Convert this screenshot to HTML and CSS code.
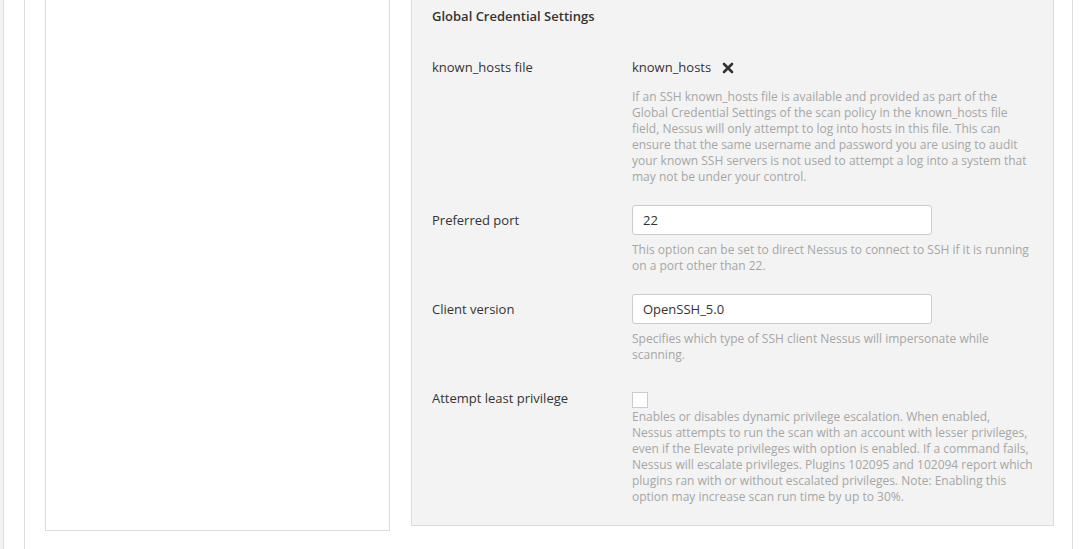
FILE: index.html
```html
<!DOCTYPE html>
<html>
<head>
<meta charset="utf-8">
<link rel="stylesheet" href="styles.css">
</head>
<body>
<div class="page">
  <div class="rail"></div>
  <div class="main">
    <div class="content">
      <div class="sidebox"></div>
      <section class="panel">
        <h3 class="panel-title">Global Credential Settings</h3>

        <div class="row">
          <div class="label">known_hosts file</div>
          <div class="field">
            <div class="file-value">
              <span>known_hosts</span>
              <svg class="remove" width="12" height="12" viewBox="0 0 12 12"><path d="M2 2 L10 10 M10 2 L2 10" stroke="#333" stroke-width="2.6" stroke-linecap="round"/></svg>
            </div>
            <p class="help">If an SSH known_hosts file is available and provided as part of the Global Credential Settings of the scan policy in the known_hosts file field, Nessus will only attempt to log into hosts in this file. This can ensure that the same username and password you are using to audit your known SSH servers is not used to attempt a log into a system that may not be under your control.</p>
          </div>
        </div>

        <div class="row">
          <div class="label">Preferred port</div>
          <div class="field">
            <input class="text-input" type="text" value="22">
            <p class="help">This option can be set to direct Nessus to connect to SSH if it is running on a port other than 22.</p>
          </div>
        </div>

        <div class="row">
          <div class="label">Client version</div>
          <div class="field">
            <input class="text-input" type="text" value="OpenSSH_5.0">
            <p class="help">Specifies which type of SSH client Nessus will impersonate while scanning.</p>
          </div>
        </div>

        <div class="row">
          <div class="label">Attempt least privilege</div>
          <div class="field">
            <div class="checkbox"></div>
            <p class="help help-check">Enables or disables dynamic privilege escalation. When enabled, Nessus attempts to run the scan with an account with lesser privileges, even if the Elevate privileges with option is enabled. If a command fails, Nessus will escalate privileges. Plugins 102095 and 102094 report which plugins ran with or without escalated privileges. Note: Enabling this option may increase scan run time by up to 30%.</p>
          </div>
        </div>
      </section>
    </div>
  </div>
</div>
</body>
</html>
```

FILE: styles.css
```css
html, body {
  margin: 0;
  padding: 0;
  background: #fff;
  font-family: "Open Sans", "Liberation Sans", sans-serif;
  color: #333;
}

.page {
  display: flex;
  min-height: 549px;
  height: 549px;
  overflow: hidden;
}

.rail {
  width: 3px;
  flex: none;
  background: #f2f2f2;
  border-right: 1px solid #dcdcdc;
}

.main {
  padding-left: 20px;
  flex: none;
}

.content {
  width: 1009px;
  height: 549px;
  border-left: 1px solid #dcdcdc;
  border-right: 1px solid #dcdcdc;
  padding: 0 18px 0 20px;
  display: flex;
  align-items: flex-start;
  gap: 21px;
}

.sidebox {
  width: 343px;
  height: 530px;
  flex: none;
  background: #fff;
  border: 1px solid #dcdcdc;
  border-top: 0;
}

.panel {
  width: 601px;
  flex: none;
  background: #f3f3f3;
  border: 1px solid #dcdcdc;
  border-top: 0;
  padding: 7px 20px 20px 20px;
}

.panel-title {
  margin: 0 0 27px 0;
  font-size: 13px;
  line-height: 18px;
  font-weight: 600;
  color: #333;
}

.row {
  display: grid;
  grid-template-columns: 200px 1fr;
  margin-bottom: 20px;
}

.row:last-child {
  margin-bottom: 0;
}

.label {
  font-size: 13px;
  line-height: 30px;
  color: #333;
}

.field {
  min-width: 0;
}

.file-value {
  height: 30px;
  display: flex;
  align-items: center;
  gap: 11px;
  font-size: 13px;
  color: #333;
}

.remove {
  display: block;
  margin-top: 1px;
}

.text-input {
  display: block;
  box-sizing: border-box;
  width: 300px;
  height: 30px;
  margin: 0;
  padding: 0 10px;
  border: 1px solid #cccccc;
  border-radius: 3px;
  background: #fff;
  font-family: "Open Sans", "Liberation Sans", sans-serif;
  font-size: 13px;
  color: #333;
  outline: none;
}

.help {
  margin: 7px 0 0 0;
  font-size: 12px;
  line-height: 16px;
  color: #a6a6a6;
  max-width: 402px;
}

.checkbox {
  width: 14px;
  height: 14px;
  margin-top: 9px;
  background: #fff;
  border: 1px solid #cccccc;
}

.help-check {
  margin-top: 1px;
}
```
